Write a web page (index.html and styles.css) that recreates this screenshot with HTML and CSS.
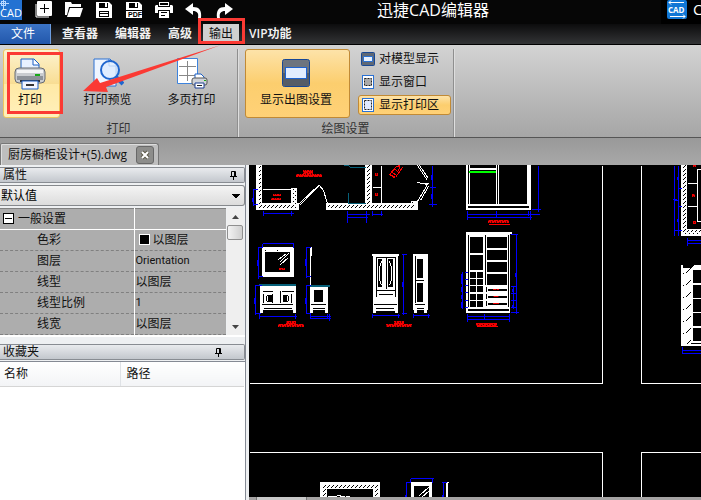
FILE: index.html
```
<!DOCTYPE html>
<html lang="zh-CN">
<head>
    <meta charset="UTF-8">
    <title>迅捷CAD编辑器</title>
    <link rel="stylesheet" href="styles.css">
</head>
<body>
    <header class="titlebar">
        <svg class="logo" width="22" height="20" viewBox="0 0 22 20">
            <rect width="22" height="20" fill="#2372d2"/>
            <path d="M0 3.5H9M3.5 0V9" stroke="#b5d6ff" fill="none"/>
            <rect x="1.5" y="1.5" width="4" height="4" stroke="#b5d6ff" fill="none"/>
            <text x="0" y="17" class="logo-text">CAD</text>
        </svg>
        <div class="quick">
            <button class="quick-btn" aria-label="新建">
                <svg width="18" height="18" viewBox="0 0 18 18"><path d="M1 4v13h13" fill="none" stroke="#fff" stroke-width="1"/><rect x="2" y="1" width="15" height="15" rx="1" fill="#fff"/><path d="M9.5 4v9M5 8.5h9" stroke="#000" stroke-width="1"/></svg>
            </button>
            <button class="quick-btn" aria-label="打开">
                <svg width="18" height="18" viewBox="0 0 18 18"><path d="M0 2h6l1 2h9v3H4L2 15H0z" fill="#fff"/><path d="M5 8h13l-3 9H2z" fill="#fff"/></svg>
            </button>
            <button class="quick-btn" aria-label="保存">
                <svg width="18" height="18" viewBox="0 0 18 18"><path d="M1 2h13l3 3v13H1z" fill="#fff"/><path d="M4 3h9v5H4zM4 11h10v6H4z" fill="#000"/><path d="M10 3h2v4h-2zM5 12h8v1H5zM5 14h8v2H5z" fill="#fff"/></svg>
            </button>
            <button class="quick-btn" aria-label="导出PDF">
                <svg width="18" height="18" viewBox="0 0 18 18"><path d="M1 2h13l3 3v13H1z" fill="#fff"/><path d="M4 3h9v5H4zM1 10h16v1H1z" fill="#000"/><path d="M10 3h2v4h-2z" fill="#fff"/><text x="3" y="17" class="pdf-text">PDF</text></svg>
            </button>
            <button class="quick-btn" aria-label="打印">
                <svg width="18" height="18" viewBox="0 0 18 18"><path d="M4 2h10v4H4zM1 5h2v2h12V5h2l1 1v7h-3v-3H3v3H0V6z" fill="#fff"/><path d="M5 3h8v2H5z" fill="#000"/><path d="M4 11h10v7H4z" fill="#fff"/><path d="M6 12h6v1H6zM6 15h4v1H6z" fill="#000"/></svg>
            </button>
            <button class="quick-btn" aria-label="撤销">
                <svg width="18" height="18" viewBox="0 0 18 18"><path d="M0 9l8-6v4c6 0 9 3 8 11h-3c1-5-1-7-5-7v4z" fill="#fff"/></svg>
            </button>
            <button class="quick-btn" aria-label="重做">
                <svg width="18" height="18" viewBox="0 0 18 18"><path d="M18 9l-8-6v4c-6 0-9 3-8 11h3c-1-5 1-7 5-7v4z" fill="#fff"/></svg>
            </button>
        </div>
        <h1 class="title">迅捷CAD编辑器</h1>
        <div class="account">
            <svg width="20" height="20" viewBox="0 0 20 20">
                <rect width="20" height="19" rx="2" fill="#1177d5"/>
                <path d="M2 2.5h15M4 .5L2 2.5l2 2M18 16.5H3M16 14.5l2 2-2 2" stroke="#fff" fill="none"/>
                <text x="1" y="13" class="account-text">CAD</text>
            </svg>
            <span>CAD</span>
        </div>
    </header>

    <nav class="menu">
        <a class="menu-item file" href="#">文件</a>
        <a class="menu-item" href="#">查看器</a>
        <a class="menu-item" href="#">编辑器</a>
        <a class="menu-item" href="#">高级</a>
        <a class="menu-item active" href="#">输出</a>
        <a class="menu-item" href="#">VIP功能</a>
    </nav>

    <section class="ribbon">
        <div class="group print-group">
            <div class="group-body">
                <button class="big hot">
                    <svg width="32" height="32" viewBox="0 0 32 32">
                        <path d="M7 11V1h13l5 5v5z" fill="#e9f2ff" stroke="#1b5fc4"/><path d="M19 1v6h6" fill="#fff" stroke="#1b5fc4"/>
                        <rect x="1" y="10" width="30" height="15" rx="4" fill="#c9ccd0" stroke="#666a70"/>
                        <path d="M3 12h26v3H3z" fill="#f4f5f6"/><path d="M3 18h26v4H3z" fill="#8d9299"/><path d="M21 16h5v2h-5z" fill="#18a818"/>
                        <path d="M6 22h20v2H6z" fill="#33373c"/><path d="M8 23h16v8H8z" fill="#f2f6ff" stroke="#1b5fc4"/><path d="M12 26h8v2h-8z" fill="#333"/>
                    </svg>
                    <span>打印</span>
                </button>
                <button class="big">
                    <svg width="32" height="32" viewBox="0 0 32 32">
                        <path d="M2 1h16l6 6v21H2z" fill="#eef5ff" stroke="#2a71d3"/><path d="M17 1v7h7" fill="#fff" stroke="#2a71d3"/>
                        <circle cx="18" cy="12" r="9" fill="#dcebff" fill-opacity=".8" stroke="#1f66cf" stroke-width="2"/>
                        <path d="M24 19l7 7" stroke="#1f66cf" stroke-width="4"/>
                    </svg>
                    <span>打印预览</span>
                </button>
                <button class="big">
                    <svg width="32" height="32" viewBox="0 0 32 32">
                        <path d="M1.5 .5h20v25h-20z" fill="#fff" stroke="#3d83dd"/>
                        <path d="M11.5 3v20M3 8.5h17M3 17.5h17" stroke="#888" fill="none"/>
                        <path d="M19 21v-5h6l3 3v2z" fill="#fff" stroke="#1b5fc4"/><rect x="16" y="20" width="15" height="7" rx="2" fill="#d0d3d8" stroke="#555"/>
                        <path d="M19 25h9v5h-9z" fill="#fff" stroke="#1b3f94"/><path d="M21 27h5v1h-5z" fill="#222"/><path d="M28 22h2v1h-2z" fill="#18a818"/>
                    </svg>
                    <span>多页打印</span>
                </button>
            </div>
            <div class="group-name">打印</div>
        </div>
        <div class="group plot-group">
            <div class="group-body">
                <button class="big wide on">
                    <svg width="32" height="32" viewBox="0 0 32 32"><rect x="2.5" y="1.5" width="27" height="27" rx="2" fill="#6d747e" stroke="#174795"/><path d="M3 15h26v13H3z" fill="#555c66"/><rect x="5.500" y="9.5" width="21" height="11" fill="#e2edff" stroke="#1d62d0"/></svg>
                    <span>显示出图设置</span>
                </button>
                <div class="small-list">
                    <button class="small">
                        <svg width="14" height="14" viewBox="0 0 14 14"><rect x=".5" y=".5" width="13" height="13" rx="1" fill="#5f6875" stroke="#174795"/><path d="M2.5 4.5h9v5h-9z" fill="#e9f2ff" stroke="#2a71d3"/></svg>
                        对模型显示
                    </button>
                    <button class="small">
                        <svg width="14" height="14" viewBox="0 0 14 14"><rect x="1.5" y=".5" width="11" height="13" fill="#fff" stroke="#2a71d3"/><rect x="3.5" y="3.5" width="7" height="7" fill="#aaa" stroke="#222" stroke-dasharray="2 1"/></svg>
                        显示窗口
                    </button>
                    <button class="small on">
                        <svg width="14" height="14" viewBox="0 0 14 14"><rect x="1.5" y=".5" width="11" height="13" fill="#fff" stroke="#2a71d3"/><rect x="3.5" y="2.5" width="7" height="9" fill="#dfeaff" stroke="#222" stroke-dasharray="2 1"/></svg>
                        显示打印区
                    </button>
                </div>
            </div>
            <div class="group-name">绘图设置</div>
        </div>
    </section>

    <div class="tabs">
        <div class="tab">
            <span>厨房橱柜设计+(5).dwg</span>
            <button class="tab-close" aria-label="关闭">
                <svg width="10" height="10" viewBox="0 0 10 10"><path d="M2 2l6 6M8 2L2 8" stroke="#5d5a48" stroke-width="4"/><path d="M2 2l6 6M8 2L2 8" stroke="#fff" stroke-width="2"/></svg>
            </button>
        </div>
    </div>

    <main class="work">
        <aside class="side">
            <h2 class="panel-head">属性
                <svg class="pin" width="9" height="10" viewBox="0 0 9 10"><path d="M2.5 6V1.5h4V6M1 6.5h7M4.5 7v3M5.5 1v5" stroke="#000" fill="none"/></svg>
            </h2>
            <select class="preset" aria-label="预设">
                <option>默认值</option>
            </select>
            <div class="props">
                <table class="prop-table">
                    <tr class="section"><th><span class="fold"></span>一般设置</th><td></td></tr>
                    <tr><th>色彩</th><td><span class="swatch"></span>以图层</td></tr>
                    <tr><th>图层</th><td class="latin">Orientation</td></tr>
                    <tr><th>线型</th><td>以图层</td></tr>
                    <tr><th>线型比例</th><td class="latin">1</td></tr>
                    <tr><th>线宽</th><td>以图层</td></tr>
                </table>
                <div class="scroll">
                    <button class="scroll-btn" aria-label="向上"><svg width="7" height="4" viewBox="0 0 7 4"><path d="M0 4l3.5-4L7 4z" fill="#444"/></svg></button>
                    <div class="thumb"></div>
                    <button class="scroll-btn" aria-label="向下"><svg width="7" height="4" viewBox="0 0 7 4"><path d="M0 0l3.5 4L7 0z" fill="#444"/></svg></button>
                </div>
            </div>
            <h2 class="panel-head fav-head">收藏夹
                <svg class="pin" width="9" height="10" viewBox="0 0 9 10"><path d="M2.5 6V1.5h4V6M1 6.5h7M4.5 7v3M5.5 1v5" stroke="#000" fill="none"/></svg>
            </h2>
            <div class="fav">
                <table class="fav-table">
                    <tr><th>名称</th><th>路径</th></tr>
                </table>
            </div>
        </aside>

        <div class="canvas">
            <svg class="drawing" shape-rendering="crispEdges">
                <defs>
                    <pattern id="hatch" width="4" height="4" patternUnits="userSpaceOnUse">
                        <rect width="4" height="4" fill="#fff"/>
                        <path d="M0 2h1v1H0zM1 1h1v1H1zM3 3h1v1H3z" fill="#000"/>
                    </pattern>
                    <pattern id="slash" width="9" height="12" patternUnits="userSpaceOnUse">
                        <rect width="9" height="12" fill="#fff"/>
                        <path d="M2 8h1v1H2zM3 7h1v1H3zM4 6h1v1H4zM5 5h1v1H5zM6 4h1v1H6zM7 10h1v1H7zM8 9h1v1H8z" fill="#000"/>
                    </pattern>
                    <pattern id="smear" width="5" height="4" patternUnits="userSpaceOnUse">
                        <rect width="5" height="4" fill="#f00000"/>
                        <path d="M1 1h1v2H1zM3 0h1v1H3zM4 2h1v1H4z" fill="#600"/>
                    </pattern>
                </defs>

                <!-- solid parts -->
                <g transform="translate(-249 -165)">
                    <!-- floor plan walls -->
                    <path d="M256 165h6v38h29v-15h6v15h2v7h-43zM326 203h39v-38h7v38h39v-2h7v9h-92z" fill="#fff"/>
                    <path d="M258 165h3v39h32v-15h3v19h-38zM328 204h38v-39h4v39h42v-2h3v6h-87z" fill="url(#hatch)"/>
                    <!-- tall cabinet, upper -->
                    <path d="M466 165h65v45h-65z" fill="#fff"/>
                    <path d="M468 165h1v39h-1zM470 165h26v3h-26zM470 170h26v34h-26zM497 165h1v39h-1zM499 165h28v39h-28zM468 206h61v2h-61z"/>
                    <path d="M469 171h27v2h-27z" fill="#0f0"/>
                    <!-- mirror and washstand -->
                    <path d="M262 247h32v30h-32zM310 247h2v9h-2zM310 256h1v29h-1z" fill="#fff"/>
                    <path d="M265 252h25v20h-25zM265 250h1v1h-1zM277 250h1v1h-1z"/>
                    <path d="M260 286h36v24h-36zM260 310h3v3h-3zM293 310h3v3h-3zM310 286h18v24h-18zM310 310h3v3h-3zM325 310h3v3h-3z" fill="#fff"/>
                    <path d="M263 291h10v1h-10zM282 291h12v1h-12zM263 294h1v9h-1zM272 294h1v9h-1zM280 291h1v12h-1zM291 294h1v9h-1zM262 304h31v1h-31zM266 296h1v5h-1zM267 295h5v1h-5zM268 296h4v5h-4zM267 301h5v1h-5zM283 295h5v1h-5zM283 296h4v5h-4zM288 296h1v5h-1zM283 301h5v1h-5zM264 308h28v1h-28zM314 290h9v12h-9zM311 304h15v1h-15zM313 308h12v1h-12z"/>
                    <path d="M259 284h37v2h-37zM310 285h20v2h-20z" fill="#066079"/>
                    <!-- wardrobe -->
                    <path d="M372 254h27v2h-27zM373 256h25v55h-25zM373 311h3v2h-3zM395 311h3v2h-3zM413 254h15v56h-15zM414 310h3v3h-3zM424 310h3v3h-3z" fill="#fff"/>
                    <path d="M376 257h19v1h-19zM376 258h1v39h-1zM378 259h4v28h-4zM386 257h1v32h-1zM388 259h5v28h-5zM395 257h1v40h-1zM376 290h19v1h-19zM379 294h14v1h-14zM374 304h23v1h-23zM376 308h18v1h-18zM415 256h1v47h-1zM417 259h6v19h-6zM416 280h8v1h-8zM417 283h6v19h-6zM415 304h10v1h-10zM417 308h7v1h-7z"/>
                    <!-- big cabinet -->
                    <path d="M466 232h46v2h-2v79h-44z" fill="#fff"/>
                    <path d="M468 235h1v72h-1zM470 237h13v16h-13zM470 255h13v15h-13zM470 272h6v6h-6zM477 272h6v6h-6zM470 279h6v6h-6zM477 279h6v6h-6zM470 286h6v6h-6zM477 286h6v6h-6zM470 294h6v6h-6zM477 294h6v6h-6zM470 301h6v6h-6zM477 301h6v6h-6zM485 235h1v50h-1zM487 237h20v11h-20zM487 250h20v10h-20zM487 262h20v10h-20zM487 274h20v11h-20zM508 235h1v72h-1zM486 287h1v5h-1zM488 289h19v2h-19zM486 294h1v5h-1zM488 296h19v2h-19zM486 301h1v5h-1zM488 303h19v2h-19zM468 309h41v2h-41z"/>
                    <!-- right edge plan -->
                    <path d="M681 165h6v64h60v7h-66z" fill="#fff"/>
                    <path d="M683 165h3v65h60v4h-63z" fill="url(#hatch)"/>
                    <path d="M681 265h2v3h8l3-3h60v81h-73z" fill="#fff"/>
                    <path d="M683 268h8v76h-8z" fill="url(#slash)"/>
                    <path d="M693 270h60v13h-60zM693 285h60v13h-60zM693 299h60v13h-60zM693 313h60v13h-60zM693 328h60v13h-60zM691 343h60v1h-60z"/>
                    <!-- bottom pieces -->
                    <path d="M320 482h60v20h-60z" fill="#fff"/>
                    <path d="M322 484h56v18h-56z" fill="url(#hatch)"/>
                    <path d="M326 488h48v14h-48z" fill="#fff"/>
                    <path d="M327 489h46v13h-46z"/>
                    <path d="M411 482h21v20h-21zM446 482h3v1h-1v20h-2z" fill="#fff"/>
                    <path d="M414 486h15v16h-15z"/>
                    <!-- captions too small to read at this scale -->
                    <path d="M303 170h10v4h-10zM296 174h26v3h-26zM273 194h8v2h-8zM271 198h10v2h-10zM375 173h3v3h-3zM375 193h3v3h-3zM488 220h21v3h-21zM279 268h6v2h-6zM286 321h10v4h-10zM278 324h26v3h-26zM394 321h10v4h-10zM386 324h26v3h-26zM476 323h21v3h-21zM493 289h6v1h-6zM493 296h6v1h-6zM493 303h6v1h-6zM693 165h3v2h-3zM692 194h3v3h-3zM693 221h3v3h-3z" fill="url(#smear)"/>
                </g>

                <!-- one pixel lines -->
                <g transform="translate(-248.5 -164.5)" fill="none">
                    <g stroke="#fff">
                        <path d="M262 189h29M299 205l20-20 4 5 4 13M299 203l20-19M381 165v38M372 187h9M417 165l10 15M419 165l9 13M417 182l10 2M421 183h7M427 184l-10 17M428 186l-8 14"/>
                        <path d="M249 383h353V165M701 383h-60V165M249 452h353v50M701 452h-60v50"/>
                        <path d="M687 183h10M687 206h10M753 169h-56v52h56"/>
                        <path d="M279 262l9-9M280 264l8-7M278 259l8-6M419 495l10-9M421 497l8-7M327 496h8l3-1 8 2M346 496l6 1"/>
                        <path d="M381 261l-2 6v12l2 6M389 261l2 6v12l-2 6"/>
                    </g>
                    <path d="M343 165h5l2 2h15M348 192v11h17M356 203h4" stroke="#066079"/>
                    <g stroke="#f00">
                        <path d="M389 174l7-8 4-1M389 174l6 4M395 177l7-10M392 172l4 3M395 169l3 3M399 166l-1 5M390 174l5 3M488 224h21M476 326h21"/>
                    </g>
                    <g stroke="#00f">
                        <path d="M253 189v16M252 189h5M252 204h5M263 210v5M291 210v5M262 213h31M347 210v12M366 210v12M347 214h22M347 217h20M372 210v5M381 210v5M371 214h11M252 197v4"/>
                        <path d="M432 165v41M429 187h6M428 204h8M431 174v5M431 193v5"/>
                        <path d="M538 165v46M531 209h9M467 210v9M496 210v6M528 210v5M530 210v9M467 214h72M467 217h64"/>
                        <path d="M262 243h31M262 243v4M293 243v4M258 247v31M257 247h5M257 276h5M257 259v6M261 285h-7M255 285v29M255 313h5M254 297v6M259 313v5M295 313v5M258 316h38"/>
                        <path d="M305 247h5M306 247v30M305 276h5M305 258v7M305 285h5M306 285v28M305 313h5M305 297v6M310 313v5M327 313v5M329 313v7M310 316h20M310 318h20"/>
                        <path d="M403 253v61M401 254h5M401 313h5M402 281v5M372 313v4M398 313v4M371 315h28M413 313v4M428 313v4M413 315h16"/>
                        <path d="M510 234h7M516 234v79M510 312h8M515 272v4M513 286v22M510 286h5M510 293h5M510 300h5M510 307h5M512 288v3M512 304v3M464 272h3M464 279h3M464 285h3M464 292h3M464 300h3M464 307h3M462 271v37M461 273v10M461 286v5M461 294v4M461 301v6M467 313v8M484 313v5M509 313v8M467 316h42M467 319h42"/>
                        <path d="M674 165v70M678 165v70M673 200h5M677 188h4M677 206h4M673 230h8M672 199h4M677 176v3M677 218v3M687 237v8M686 240h20M686 243h20M682 346v7M682 350h30M682 353h30"/>
                        <path d="M410 478h23M410 478v4M432 478v4M405 482h5M406 482v20M405 494v6M441 482h5M443 482v20M442 494v6"/>
                    </g>
                </g>
            </svg>
            <div class="sheetbar"><span class="sheet"></span></div>
        </div>
    </main>

    <!-- guide marks over the window -->
    <svg class="marks" width="260" height="130" viewBox="0 0 260 130">
        <path d="M199.5 19.500h44v23h-44z" fill="none" stroke="#fb3a34" stroke-width="3"/>
        <path d="M8.5 53.500h53v59h-53z" fill="none" stroke="#fb3a34" stroke-width="3"/>
        <path d="M83 91l14-13 3 5L221 45 106 87l2 5z" fill="#fb3a34"/>
    </svg>
</body>
</html>
```
FILE: styles.css
```
*{box-sizing: border-box;}

body{
    margin: 0;
    min-height: 100vh;
    display: flex;
    flex-direction: column;
    overflow: hidden;
    position: relative;
    background-color: #eef0f2;
    font-family: "Open Sans", "Noto Sans CJK SC", sans-serif;
    font-size: 12px;
    line-height: 16px;
    color: #111;
}

button{
    border: 1px solid transparent;
    background: none;
    padding: 0;
    margin: 0;
    font: inherit;
    color: inherit;
}

svg{display: block;}

h1, h2{
    margin: 0;
    font-size: 12px;
    font-weight: normal;
}

/* title bar */
.titlebar{
    height: 24px;
    display: flex;
    background-color: #060606;
    color: white;
}

.logo-text{
    font: 11px "Open Sans", sans-serif;
    fill: white;
}

.pdf-text{
    font: bold 7px "Liberation Sans", sans-serif;
    fill: black;
}

.account-text{
    font: bold 8px "Open Sans", sans-serif;
    fill: white;
}

.quick{
    display: flex;
    gap: 12px;
    margin-left: 13px;
}

.quick-btn{
    width: 18px;
    height: 20px;
    border: 0;
    display: flex;
    align-items: flex-start;
}

.title{
    flex: 1;
    padding-right: 28px;
    text-align: center;
    font-size: 16px;
    line-height: 20px;
    font-family: "Open Sans", "Noto Sans CJK SC", sans-serif;
}

.account{
    width: 40px;
    display: flex;
    gap: 6px;
    padding-left: 6px;
    background-color: black;
    font-size: 15px;
    line-height: 18px;
    overflow: hidden;
}

.account svg{flex: none;}

/* menu */
.menu{
    height: 21px;
    display: flex;
    background: linear-gradient(#0c0c0d, #333436);
    border-bottom: 1px solid #000;
}

.menu-item{
    padding: 0 9px 0 8px;
    line-height: 20px;
    font-weight: 600;
    font-size: 12px;
    color: #f2f2f2;
    text-decoration: none;
}

.menu-item.file{
    width: 51px;
    margin-right: 3px;
    padding: 0 4px 0 0;
    text-align: center;
    font-weight: normal;
    color: white;
    background: linear-gradient(#3b74c6, #2257ab);
    border-right: 1px solid #6c9de0;
}

.menu-item.active{
    margin: 0 2px;
    padding: 0 6px;
    background-color: #d0d0d0;
    color: #111;
    font-weight: normal;
}

/* ribbon */
.ribbon{
    display: flex;
    background: linear-gradient(#d3d3d3, #bcbcbc 50%, #a6a6a6);
    border-bottom: 1px solid #555;
    padding-top: 4px;
}

.group{
    border-right: 1px solid #8f8f8f;
    box-shadow: 1px 0 #dedede;
}

.print-group{width: 238px;}
.plot-group{width: 216px;}

.group-body{
    display: flex;
    height: 70px;
}

.print-group .group-body{
    padding-left: 3px;
    gap: 14px;
}

.plot-group .group-body{
    padding-left: 7px;
    gap: 8px;
}

.group-name{
    text-align: center;
    padding-top: 1px;
    line-height: 17px;
    color: #333;
}

.big{
    width: 70px;
    height: 69px;
    padding: 8px 3px 0 0;
    display: flex;
    flex-direction: column;
    align-items: center;
    gap: 2px;
    border-radius: 3px;
    white-space: nowrap;
}

.big.hot{
    width: 57px;
    background: linear-gradient(#fdf3cf, #f8dd94 50%, #ffe9a5 51%, #fff0bb);
    border-color: #efc65f;
}

.big.wide{width: 105px;}

.on{
    background: linear-gradient(#fde3a9, #fcce6e 50%, #ffd177);
    border-color: #c18a35;
}

.small-list{
    display: flex;
    flex-direction: column;
    gap: 3px;
}

.small{
    width: 93px;
    height: 20px;
    padding-left: 2px;
    display: flex;
    align-items: center;
    gap: 4px;
    border-radius: 3px;
}

/* file tabs */
.tabs{
    height: 27px;
    padding-top: 5px;
    background: linear-gradient(#999, #a8a8a8);
}

.tab{
    width: 159px;
    height: 22px;
    padding: 0 4px 0 7px;
    display: flex;
    align-items: center;
    justify-content: space-between;
    background-color: #bebebe;
    border: 1px solid #777;
    border-bottom: 0;
    border-radius: 2px 3px 0 0;
    box-shadow: inset 1px 1px #ddd;
    white-space: nowrap;
}

.tab-close{
    width: 18px;
    height: 18px;
    display: flex;
    align-items: center;
    justify-content: center;
    background-color: #8d8d8b;
    border-color: #686868;
    border-radius: 3px;
}

/* work area */
.work{
    flex: 1;
    display: flex;
}

.side{
    width: 246px;
    flex: none;
    display: flex;
    flex-direction: column;
    padding-top: 2px;
    border-right: 1px solid #858a94;
}

.panel-head{
    height: 16px;
    padding: 0 6px 0 3px;
    display: flex;
    align-items: center;
    justify-content: space-between;
    line-height: 14px;
    background: linear-gradient(#e9ebee, #c3c7cd);
    border: 1px solid #888c92;
    border-left: 0;
    border-radius: 0 2px 2px 0;
}

.preset{
    appearance: none;
    height: 21px;
    margin: 2px 0;
    padding: 0 1px;
    border: 1px solid #85888c;
    border-left: 0;
    border-radius: 0 3px 3px 0;
    font: inherit;
    color: #000;
    background: linear-gradient(45deg, transparent 50%, #000 50%) right 8px center / 4px 4px no-repeat, linear-gradient(315deg, transparent 50%, #000 50%) right 4px center / 4px 4px no-repeat, linear-gradient(#f4f4f4, #dcdcdc);
}

.props{
    display: flex;
    border-bottom: 2px solid white;
}

.prop-table{
    flex: 1;
    border-collapse: collapse;
    table-layout: fixed;
    background-color: #adadad;
}

.prop-table th,
.prop-table td{
    height: 21px;
    padding: 0 0 0 1px;
    text-align: left;
    font-weight: normal;
    line-height: 20px;
    border-bottom: 1px dashed #808080;
}

.prop-table th{
    width: 134px;
    padding-left: 37px;
    border-right: 1px solid white;
}

.prop-table .section th{padding-left: 3px;}

.prop-table .section th,
.prop-table .section td{
    border-top: 1px solid #808080;
    border-bottom: 1px solid white;
}

.prop-table .latin{
    font-family: Roboto, sans-serif;
    font-size: 11px;
}

.fold{
    display: inline-block;
    width: 11px;
    height: 11px;
    margin-right: 4px;
    border: 1px solid black;
    background: linear-gradient(black, black) center / 7px 1px no-repeat white;
    vertical-align: -1px;
}

.swatch{
    display: inline-block;
    width: 11px;
    height: 11px;
    margin: 0 3px;
    border: 1px solid white;
    background-color: black;
    vertical-align: -1px;
}

.scroll{
    width: 16px;
    margin: 0 2px 0 1px;
    display: flex;
    flex-direction: column;
    background-color: #efefef;
}

.scroll-btn{
    height: 17px;
    display: flex;
    align-items: center;
    justify-content: center;
}

.thumb{
    height: 15px;
    margin-bottom: auto;
    border: 1px solid #8f8f8f;
    border-radius: 2px;
    background: linear-gradient(90deg, #f3f3f3, #cfcfcf);
}

.fav-head{
    margin-top: 7px;
    padding-right: 21px;
}

.fav{
    flex: 1;
    margin-top: 1px;
    border-top: 1px solid #858a94;
    background-color: white;
}

.fav-table{
    width: 244px;
    border-collapse: collapse;
    table-layout: fixed;
}

.fav-table th{
    width: 120px;
    height: 24px;
    padding: 0 0 0 4px;
    text-align: left;
    font-weight: normal;
    background: linear-gradient(white, #f3f4f6);
    border-bottom: 1px solid #d5d5d5;
}

.fav-table th + th{
    width: 124px;
    padding-left: 6px;
    border-left: 1px solid #dfe2e6;
}

/* drawing area */
.canvas{
    flex: 1;
    min-width: 0;
    margin-left: 3px;
    display: flex;
    flex-direction: column;
    background-color: black;
}

.drawing{
    width: 100%;
    flex: 1;
    min-height: 0;
}

.sheetbar{
    height: 3px;
    padding-left: 7px;
    background-color: #a5a3a3;
}

.sheet{
    display: block;
    width: 51px;
    height: 3px;
    background-color: #c8c8c8;
    border-left: 1px solid #777;
    border-right: 1px solid #777;
}

/* guide marks */
.marks{
    position: absolute;
    left: 0;
    top: 0;
    pointer-events: none;
}
```
